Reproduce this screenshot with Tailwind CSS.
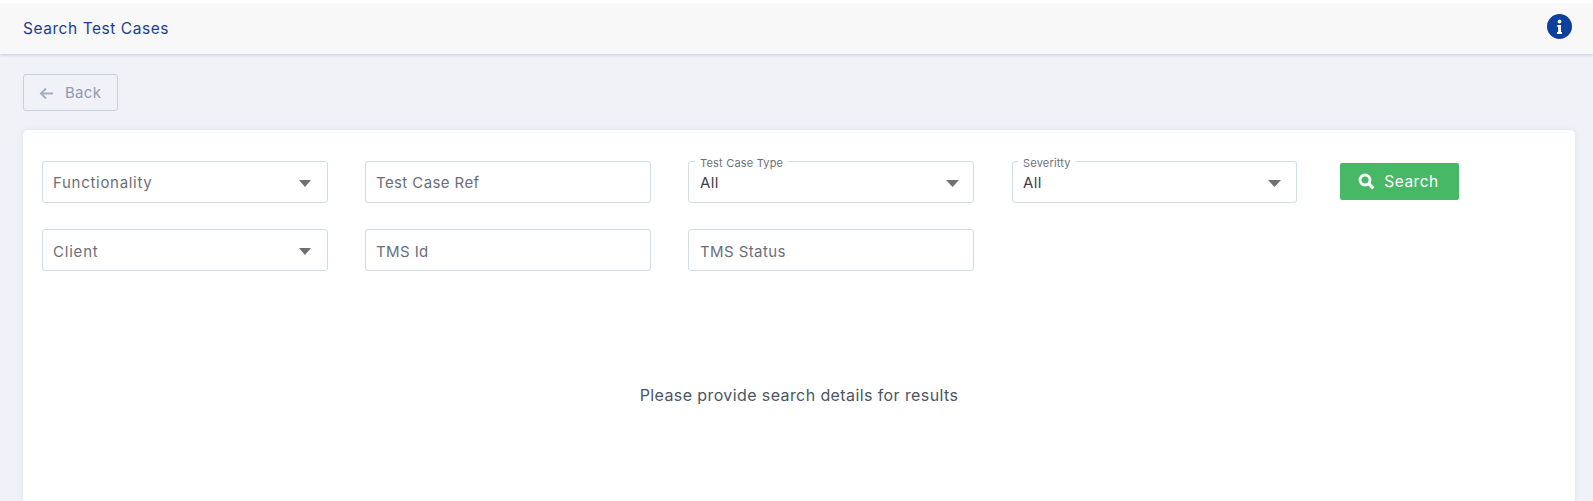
<!DOCTYPE html>
<html>
<head>
<meta charset="utf-8">
<script src="https://cdn.jsdelivr.net/npm/@tailwindcss/browser@4"></script>
</head>
<body class="bg-[#f0f2f8] font-['Inter',sans-serif] w-[1593px] h-[501px] overflow-hidden">
<header class="h-[54px] bg-[#f8f8f9] border-t-[3px] border-white shadow-[0_1px_3px_rgba(100,120,180,0.3)] flex items-center justify-between pl-[23px] pr-[21px]">
  <h1 class="text-[15.5px] text-[#1f3d8a] tracking-[0.55px]">Search Test Cases</h1>
  <svg class="w-[25px] h-[25px] -mt-[4px]" viewBox="0 0 25 25"><circle cx="12.5" cy="12.5" r="12.5" fill="#0d3f9b"/><circle cx="12.5" cy="7.5" r="1.9" fill="#fff"/><path d="M10.3 11h3.7v7h1v2H10v-2h1.1v-5h-.8z" fill="#fff"/></svg>
</header>
<main class="pl-[23px] pr-[18px] pt-[20px]">
  <button class="w-[95px] h-[37px] border border-[#c9d0de] rounded-[3px] flex items-center pl-[15px] gap-[11px] text-[#8f9ab0] text-[15px] tracking-[0.3px]">
    <svg class="w-[15px] h-[13px] mt-[2px]" viewBox="0 0 15 13" fill="none" stroke="#a3adc4" stroke-width="2"><path d="M14 6.5H2M7 1.5l-5 5 5 5"/></svg>
    <span class="mt-[1px]">Back</span>
  </button>
  <section class="mt-[19px] bg-white rounded-t-[5px] h-[380px] shadow-[0_0_4px_rgba(100,120,180,0.15)] pl-[19px] pt-[31px]">
    <div class="grid grid-cols-[286px_286px_286px_286px_auto] gap-x-[37px] gap-y-[26px] justify-start items-center text-[15px] tracking-[0.4px] text-[#6b6f79]">
      <div class="h-[42px] border border-[#d0dde2] rounded-[3px] flex items-center justify-between pl-[10px] pr-[16px]">
        <span class="mt-[2px] tracking-[0.7px]">Functionality</span>
        <svg class="w-[12px] h-[7px] mt-[3px]" viewBox="0 0 12 7"><path d="M0 0h12L6 7z" fill="#707070"/></svg>
      </div>
      <div class="h-[42px] border border-[#d0dde2] rounded-[3px] flex items-center pl-[10px] pt-[2px]">Test Case Ref</div>
      <div class="relative h-[42px] border border-[#d0dde2] rounded-[3px] flex items-center justify-between pl-[11px] pr-[14px]">
        <span class="absolute left-[6px] -top-[4px] bg-white px-[5px] text-[11px] leading-[11px] tracking-[0.2px] text-[#6b7078]">Test Case Type</span>
        <span class="mt-[2px] text-[#3d4048]">All</span>
        <svg class="w-[13px] h-[7px] mt-[3px]" viewBox="0 0 13 7"><path d="M0 0h13L6.5 7z" fill="#707070"/></svg>
      </div>
      <div class="relative ml-[1px] h-[42px] border border-[#d0dde2] rounded-[3px] flex items-center justify-between pl-[10px] pr-[15px]">
        <span class="absolute left-[5px] -top-[4px] bg-white px-[5px] text-[11px] leading-[11px] tracking-[0.2px] text-[#6b7078]">Severitty</span>
        <span class="mt-[2px] text-[#3d4048]">All</span>
        <svg class="w-[13px] h-[7px] mt-[3px]" viewBox="0 0 13 7"><path d="M0 0h13L6.5 7z" fill="#707070"/></svg>
      </div>
      <button class="ml-[6px] -mt-[1px] w-[119px] h-[37px] bg-[#46b866] rounded-[2px] flex items-center justify-center gap-[9px] text-white text-[15.5px] tracking-[0.5px]">
        <svg class="w-[17px] h-[17px] -ml-[2px]" viewBox="0 0 17 17" fill="none" stroke="#fff"><circle cx="7" cy="7" r="5" stroke-width="2.8"/><path d="M10.7 10.7L15.3 15.3" stroke-width="3.2"/></svg>
        <span class="mt-[1px]">Search</span>
      </button>
      <div class="h-[42px] border border-[#d0dde2] rounded-[3px] flex items-center justify-between pl-[10px] pr-[16px]">
        <span class="mt-[4px] tracking-[0.8px]">Client</span>
        <svg class="w-[12px] h-[7px] mt-[3px]" viewBox="0 0 12 7"><path d="M0 0h12L6 7z" fill="#707070"/></svg>
      </div>
      <div class="h-[42px] border border-[#d0dde2] rounded-[3px] flex items-center pl-[10px] pt-[4px]">TMS Id</div>
      <div class="h-[42px] border border-[#d0dde2] rounded-[3px] flex items-center pl-[11px] pt-[4px]">TMS Status</div>
    </div>
    <p class="mt-[114px] pr-[19px] text-center text-[16px] leading-[20px] tracking-[0.4px] text-[#4b5563]">Please provide search details for results</p>
  </section>
</main>
</body>
</html>
